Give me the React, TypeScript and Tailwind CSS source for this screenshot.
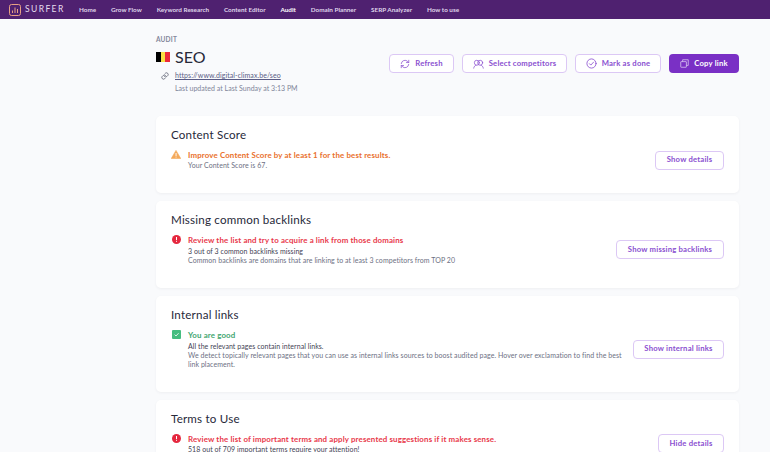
import React from "react";

const nav = ["Home", "Grow Flow", "Keyword Research", "Content Editor", "Audit", "Domain Planner", "SERP Analyzer", "How to use"];

function Btn({ children, className = "" }: { children: React.ReactNode; className?: string }) {
  return (
    <div className={`flex h-[19px] items-center justify-center gap-[5px] rounded-[4px] border border-[#dcc8f5] bg-white text-[7.7px] font-bold tracking-[0.2px] text-[#8a4fd0] ${className}`}>
      {children}
    </div>
  );
}

function Outline({ children, w }: { children: React.ReactNode; w: string }) {
  return (
    <div className={`flex h-[19px] shrink-0 items-center justify-center rounded-[4px] border border-[#dcc8f5] bg-white text-[7.7px] font-bold tracking-[0.2px] text-[#8a4fd0] ${w}`}>
      {children}
    </div>
  );
}

function Warn() {
  return (
    <svg width="10" height="9" viewBox="0 0 10 9" className="shrink-0">
      <path d="M5 0.4 L9.8 8.6 H0.2 Z" fill="#f4a95a" stroke="#f4a95a" strokeLinejoin="round" strokeWidth="0.6" />
      <rect x="4.6" y="3" width="0.9" height="3" fill="#fff" />
      <rect x="4.6" y="6.6" width="0.9" height="0.9" fill="#fff" />
    </svg>
  );
}

function Err() {
  return (
    <svg width="9" height="9" viewBox="0 0 9 9" className="shrink-0">
      <circle cx="4.5" cy="4.5" r="4.5" fill="#e5283f" />
      <rect x="4" y="2" width="1" height="3" fill="#fff" />
      <rect x="4" y="5.8" width="1" height="1" fill="#fff" />
    </svg>
  );
}

function Good() {
  return (
    <svg width="9" height="9" viewBox="0 0 9 9" className="shrink-0">
      <rect width="9" height="9" rx="1" fill="#45bd80" />
      <path d="M2.6 4.6 L4 6 L6.6 3.2" fill="none" stroke="#fff" strokeWidth="0.8" />
    </svg>
  );
}

function Card({
  title, icon, head, headColor, h, button, buttonW, children,
}: {
  title: string; icon: React.ReactNode; head: string; headColor: string; h: string; button: string; buttonW: string; children?: React.ReactNode;
}) {
  return (
    <section className={`flex shrink-0 items-center rounded-[5px] bg-white pl-[15px] pr-[15px] shadow-[0_1px_3px_rgba(30,30,60,0.05)] ${h}`}>
      <div className="flex min-w-0 flex-1 flex-col self-start pt-[10px]">
        <h2 className="text-[11.6px] leading-[17px] font-normal tracking-[0.2px] text-[#27293a]">{title}</h2>
        <div className="mt-[7px] flex gap-[7px]">
          <div className="flex w-[10px] justify-center">{icon}</div>
          <div className="min-w-0 flex-1">
            <div className={`text-[7.9px] leading-[11px] font-bold tracking-[0.14px] ${headColor}`}>{head}</div>
            {children}
          </div>
        </div>
      </div>
      <div className="mt-[11px]">
        <Outline w={buttonW}>{button}</Outline>
      </div>
    </section>
  );
}

export default function App() {
  return (
    <div className="h-[452px] w-[770px] overflow-hidden bg-[#f9fafc] font-['Lato',sans-serif]">
      <header className="flex h-[19px] items-center bg-[#4f2170] pl-[9px]">
        <svg width="12" height="12" viewBox="0 0 12 12" className="shrink-0">
          <rect x="0.5" y="0.5" width="11" height="11" rx="2" fill="none" stroke="#e8a184" strokeWidth="1" />
          <path d="M3.5 9V6.5M6 9V3.5M8.5 9V5" stroke="#e8a184" strokeWidth="1" />
        </svg>
        <span className="ml-[4px] w-[42px] text-[8.5px] font-normal tracking-[1.4px] text-[#e6dcee]">SURFER</span>
        <nav className="ml-[12px] flex gap-[14.9px] text-[6.35px] font-bold text-[#dfd4ea]">
          {nav.map((n) => (
            <span key={n} className={n === "Audit" ? "text-white" : ""}>{n}</span>
          ))}
        </nav>
      </header>

      <main className="ml-[156px] w-[583px]">
        <div className="flex items-start justify-between">
          <div>
            <div className="pt-[17px] text-[6.5px] leading-[8px] font-bold tracking-[0.2px] text-[#83879a]">AUDIT</div>
            <div className="mt-[3px] flex items-center gap-[5px]">
              <div className="flex h-[10px] w-[14px]">
                <div className="flex-1 bg-black" />
                <div className="flex-1 bg-[#fae042]" />
                <div className="flex-1 bg-[#ed2939]" />
              </div>
              <h1 className="text-[16px] leading-[20px] font-normal text-[#27293a]">SEO</h1>
            </div>
            <div className="mt-[4px] flex items-center">
              <svg width="8" height="8" viewBox="0 0 24 24" fill="none" stroke="#5b5e70" strokeWidth="2.4" strokeLinecap="round" className="ml-[5px]">
                <path d="M10 13a5 5 0 0 0 7.5.5l3-3a5 5 0 0 0-7-7l-1.7 1.7" />
                <path d="M14 11a5 5 0 0 0-7.5-.5l-3 3a5 5 0 0 0 7 7l1.7-1.7" />
              </svg>
              <a className="ml-[6px] text-[7px] leading-[9px] tracking-[0.06px] text-[#5a5c86] underline">https://www.digital-climax.be/seo</a>
            </div>
            <div className="mt-[4px] ml-[19px] text-[7px] leading-[9px] tracking-[0.02px] text-[#80849a]">Last updated at Last Sunday at 3:13 PM</div>
          </div>
          <div className="mt-[35px] flex gap-[8px]">
            <Btn className="w-[65px]">
              <svg width="10" height="10" viewBox="0 0 24 24" fill="none" stroke="#8a4fd0" strokeWidth="1.8" strokeLinecap="round" strokeLinejoin="round">
                <path d="M3 11a9 9 0 0 1 15.5-5L21 8.5M21 3v5.5h-5.5" />
                <path d="M21 13a9 9 0 0 1-15.5 5L3 15.5M3 21v-5.5h5.5" />
              </svg>
              Refresh
            </Btn>
            <Btn className="w-[105px]">
              <svg width="11" height="10" viewBox="0 0 26 24" fill="none" stroke="#8a4fd0" strokeWidth="1.8" strokeLinecap="round">
                <circle cx="9" cy="9" r="6" />
                <circle cx="17" cy="9" r="6" />
                <path d="M1.5 22c.5-4 3-6.5 5.5-7M24.5 22c-.5-4-3-6.5-5.5-7" />
              </svg>
              Select competitors
            </Btn>
            <Btn className="w-[86px]">
              <svg width="11" height="11" viewBox="0 0 24 24" fill="none" stroke="#8a4fd0" strokeWidth="1.8" strokeLinecap="round" strokeLinejoin="round">
                <circle cx="12" cy="12" r="10" />
                <path d="M7.5 12.5l3 3 6-6.5" />
              </svg>
              Mark as done
            </Btn>
            <div className="flex h-[19px] w-[70px] items-center justify-center gap-[5px] rounded-[4px] bg-[#7a30c5] text-[7.7px] font-bold tracking-[0.2px] text-white">
              <svg width="9" height="9" viewBox="0 0 24 24" fill="none" stroke="#e9dcf7" strokeWidth="1.8">
                <rect x="2" y="7" width="15" height="15" rx="1" />
                <path d="M7 7V2h15v15h-5" />
              </svg>
              Copy link
            </div>
          </div>
        </div>

        <div className="mt-[23px] flex flex-col gap-[8px]">
          <Card title="Content Score" icon={<Warn />} head="Improve Content Score by at least 1 for the best results." headColor="text-[#e9702c]" h="h-[77px]" button="Show details" buttonW="w-[69px]">
            <div className="text-[7px] leading-[9px] tracking-[0.06px] text-[#6d7083]">Your Content Score is 67.</div>
          </Card>
          <Card title="Missing common backlinks" icon={<Err />} head="Review the list and try to acquire a link from those domains" headColor="text-[#e8384a]" h="h-[86.5px]" button="Show missing backlinks" buttonW="w-[108px]">
            <div className="text-[7px] leading-[10px] tracking-[0.06px] text-[#3f4254]">3 out of 3 common backlinks missing</div>
            <div className="text-[7px] leading-[9px] tracking-[0.06px] text-[#6d7083]">Common backlinks are domains that are linking to at least 3 competitors from TOP 20</div>
          </Card>
          <Card title="Internal links" icon={<Good />} head="You are good" headColor="text-[#3fa56f]" h="h-[96.5px]" button="Show internal links" buttonW="w-[91px]">
            <div className="text-[7px] leading-[10px] tracking-[0.06px] text-[#3f4254]">All the relevant pages contain internal links.</div>
            <div className="w-[442px] text-[7px] leading-[9.5px] tracking-[0.06px] text-[#6d7083]">We detect topically relevant pages that you can use as internal links sources to boost audited page. Hover over exclamation to find the best link placement.</div>
          </Card>
          <section className="flex h-[60px] shrink-0 items-start rounded-[5px] bg-white pl-[15px] pr-[15px] shadow-[0_1px_3px_rgba(30,30,60,0.05)]">
            <div className="flex min-w-0 flex-1 flex-col pt-[10px]">
              <h2 className="text-[11.6px] leading-[17px] font-normal tracking-[0.2px] text-[#27293a]">Terms to Use</h2>
              <div className="mt-[7px] flex gap-[7px]">
                <div className="flex w-[10px] justify-center"><Err /></div>
                <div>
                  <div className="text-[7.9px] leading-[11px] font-bold tracking-[0.14px] text-[#e8384a]">Review the list of important terms and apply presented suggestions if it makes sense.</div>
                  <div className="text-[7px] leading-[9px] tracking-[0.06px] text-[#3f4254]">518 out of 709 important terms require your attention!</div>
                </div>
              </div>
            </div>
            <div className="pt-[34px]"><Outline w="w-[66px]">Hide details</Outline></div>
          </section>
        </div>
      </main>
    </div>
  );
}
